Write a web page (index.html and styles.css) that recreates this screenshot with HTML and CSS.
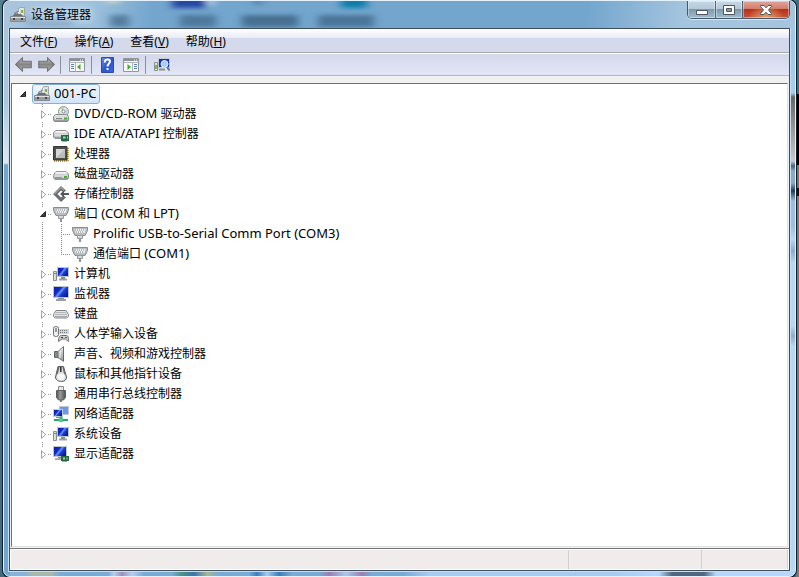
FILE: index.html
```html
<!DOCTYPE html>
<html lang="zh-CN">
<head>
<meta charset="utf-8">
<meta name="viewport" content="width=device-width, initial-scale=1">
<title>设备管理器</title>
<link rel="stylesheet" href="styles.css">
</head>
<body>
<svg class="sprite" aria-hidden="true">
  <defs>
    <linearGradient id="metal" x1="0" y1="0" x2="0" y2="1"><stop offset="0" stop-color="#f4f4f4"/><stop offset="1" stop-color="#8c9093"/></linearGradient>
    <linearGradient id="screen" x1="0" y1="0" x2="1" y2="0.600"><stop offset="0" stop-color="#0d1fae"/><stop offset=".4" stop-color="#1029c4"/><stop offset=".55" stop-color="#6f97f0"/><stop offset=".7" stop-color="#1c3fd6"/><stop offset="1" stop-color="#0c1c9c"/></linearGradient>
    <linearGradient id="arrow" x1="0" y1="0" x2="0" y2="1"><stop offset="0" stop-color="#c4c4c4"/><stop offset=".5" stop-color="#858585"/><stop offset="1" stop-color="#b4b4b4"/></linearGradient>
    <linearGradient id="book" x1="0" y1="0" x2="1" y2="1"><stop offset="0" stop-color="#6f93e8"/><stop offset=".5" stop-color="#2f55c8"/><stop offset="1" stop-color="#3b66d4"/></linearGradient>
    <linearGradient id="dark" x1="0" y1="0" x2="1" y2="0"><stop offset="0" stop-color="#4c4f51"/><stop offset=".4" stop-color="#9a9d9f"/><stop offset="1" stop-color="#4c4f51"/></linearGradient>
    <filter id="soft" x="-50%" y="-100%" width="200%" height="300%"><feGaussianBlur stdDeviation="4 2"/></filter>
  </defs>
  <symbol id="i-pc" viewBox="0 0 16 16">
    <path d="M7.500 8.500V4.500L9.500.500H14.500V9z" fill="#e9ebec" stroke="#a3a6a8"/>
    <path d="M10.500 2h3v5h-3z" fill="#fff" stroke="#bbb" stroke-width=".5"/><path d="M11 3h2v3h-2z" fill="#6dbb3c"/>
    <path d="M3 8.500l2-2 6 .5 2 2H2z" fill="#6d7174"/>
    <path d="M.500 9.500h15v5H.500z" fill="url(#metal)" stroke="#85898c"/><path d="M1 12h14" stroke="#73787b"/><path d="M3 11h2v2H3zm8 0h2v2h-2z" fill="#444"/><path d="M4 6.500l5-2.500" stroke="#777"/>
  </symbol>
  <symbol id="i-drive" viewBox="0 0 16 16">
    <path d="M1 8l2-2.500h10L15.500 8v4.500L14 13.500H2L.500 12z" fill="url(#metal)" stroke="#909497"/><path d="M2 7.500l1.500-1.500h9L14 7.500z" fill="#f7f7f7"/><path d="M1.500 9h13v3h-13z" fill="#d8dadb"/><path d="M11 10h3v2h-3z" fill="#43b52b"/><path d="M2 11.500h7" stroke="#909497"/>
  </symbol>
  <symbol id="i-dvd" viewBox="0 0 16 16">
    <circle cx="10.500" cy="5.500" r="5" fill="#dfe4e4" stroke="#8d9294"/><path d="M10.500 5.500L7.500 2A5 5 0 0 1 10.500 1z" fill="#a6d49a"/><path d="M10.500 5.500l4 2.500V4z" fill="#b8c9e5"/><circle cx="10.500" cy="5.500" r="1.500" fill="#fff" stroke="#888"/>
    <path d="M.500 10.500l2-2h11l2 2v3.500l-1 1.500H1.500l-1-1.500z" fill="url(#metal)" stroke="#85898b"/><path d="M1.500 11h13v2.500h-13z" fill="#dddfe0"/><path d="M3 12.500h6" stroke="#7f8385"/><path d="M11 11.500h3v2h-3z" fill="#3ab428"/>
  </symbol>
  <symbol id="i-ide" viewBox="0 0 16 16">
    <path d="M.500 7l2-2.500h10.500l2.500 2.500v4L14 12.500H2L.500 11z" fill="url(#metal)" stroke="#909497"/><path d="M2 6.500L3.500 5.300h9L14 6.500z" fill="#fafafa"/><path d="M1.500 8h13v2.500h-13z" fill="#dcdedf"/><path d="M8 9h8v6H8z" fill="#256b45"/><path d="M10 10.500h2.500v2H10zm4 0h1v2h-1z" fill="#a5dfb3"/><path d="M9 15.500h5" stroke="#d0ac40"/>
  </symbol>
  <symbol id="i-cpu" viewBox="0 0 16 16">
    <path d="M1 15h14V1" fill="none" stroke="#c99a37" stroke-width="2" stroke-dasharray="1 1"/><path d="M.500.500h13.500v13.500H.500z" fill="#505050" stroke="#353535"/><path d="M3 3h9v9H3z" fill="#b9bcbd"/><path d="M3 12V3h9z" fill="#d4d6d7"/>
  </symbol>
  <symbol id="i-store" viewBox="0 0 16 16">
    <path d="M8 0l5 4.500-2.500 2L8 4.500 4.500 8 8 11.500l2.500-2 2.500 2L8 16 0 8z" fill="#6c6f71"/><path d="M1.500 8L8 1.500l3 2.800" fill="none" stroke="#b8babb"/><path d="M7 8l4-3.500V7h5v2h-5v2.500z" fill="#55585a"/>
  </symbol>
  <symbol id="i-port" viewBox="0 0 16 16">
    <path d="M.500 1.500h15v3L13 9.500H3L.500 4.500z" fill="#b9bec1" stroke="#888c8f"/><path d="M2.500 3h11l-1 4h-9z" fill="#eef0f1"/><path d="M3 4h10M4 6h8" stroke="#7b8083" stroke-dasharray="1 1"/><path d="M5.500 9.500h5v3h-5z" fill="#d8dbdc" stroke="#94989a"/><path d="M7 13h2v3H7z" fill="#8f9395"/>
  </symbol>
  <symbol id="i-computer" viewBox="0 0 16 16">
    <path d="M4 1h12v10H4z" fill="#bfc5cd"/><path d="M5 2h10v8H5z" fill="url(#screen)"/><path d="M8 11h4v2H8z" fill="#858a8e"/><path d="M6 13.500h8" stroke="#9ca0a3" stroke-width="2"/><path d="M.500 5.500h3v9h-3z" fill="#d8dbdc" stroke="#888d90"/><path d="M1 7.500h2" stroke="#51ad38"/>
  </symbol>
  <symbol id="i-monitor" viewBox="0 0 16 16">
    <path d="M0 0h16v12H0z" fill="#bfc5cd"/><path d="M1 1h14v10H1z" fill="url(#screen)"/><path d="M5 12h6v1.500H5z" fill="#8b9094"/><path d="M3 14h10" stroke="#9ca0a3" stroke-width="2"/>
  </symbol>
  <symbol id="i-keyboard" viewBox="0 0 16 16">
    <path d="M3 4.500h10l2.500 4v2l-2 1.500h-11l-2-1.500v-2z" fill="#e2e4e5" stroke="#808487"/><path d="M3.500 6.500h9M2.500 8.500h11" stroke="#85898c" stroke-dasharray="1 1"/><path d="M2 10.500h12" stroke="#a2a6a8"/>
  </symbol>
  <symbol id="i-hid" viewBox="0 0 16 16">
    <rect x=".5" y=".5" width="5" height="10" rx="2" fill="#eceeef" stroke="#6d7174"/><path d="M3 2v4" stroke="#444"/><path d="M6 3h10v5H6z" fill="#d3d6d8"/><path d="M7 4.500h8M7 6.500h8" stroke="#74787b" stroke-dasharray="1 1"/><path d="M5.500 15.500c0-4 1-6 3-6h5c2 0 2 3 2 6l-3-2.500H9z" fill="#d0d4d7" stroke="#676c70"/><path d="M8 11.500h2" stroke="#333"/><path d="M12 11.500h2" stroke="#3659b8"/>
  </symbol>
  <symbol id="i-sound" viewBox="0 0 16 16">
    <path d="M1.500 5.500H5v6H1.500z" fill="#858a8d" stroke="#606467"/><path d="M5 5.500L10.500.500v15L5 11.500z" fill="url(#metal)" stroke="#7c8083"/><path d="M10.500 1v14" stroke="#666"/><path d="M7 5v7" stroke="#f6f6f6"/>
  </symbol>
  <symbol id="i-mouse" viewBox="0 0 16 16">
    <path d="M5 .500h5.500L13.500 11c0 3-2 4.500-5 4.500S2.500 14 2.500 11z" fill="#d9dbdd" stroke="#5a5e61"/><path d="M5 .500L3 10l2-3 1.500-6zM10.500.500L12.800 10l-2-3L9.500 1z" fill="#64686b"/><path d="M7.800 1v5" stroke="#2c2f31" stroke-width="1.500"/><path d="M4.500 9c2-2 5-2 7 0v3.500c-1 2-6 2-7 0z" fill="#f7f7f7"/>
  </symbol>
  <symbol id="i-usb" viewBox="0 0 16 16">
    <path d="M5.500.500h5v5h-5z" fill="#e5e7e8" stroke="#868a8d"/><path d="M3.500 4.500h9v7l-2 2.500h-5l-2-2.500z" fill="url(#dark)" stroke="#5c5f61"/><path d="M7 14h2v2H7z" fill="#777"/>
  </symbol>
  <symbol id="i-net" viewBox="0 0 16 16">
    <path d="M6 0h10v9H6z" fill="#bfc5cd"/><path d="M7 1h8v7H7z" fill="#6d98ea"/><path d="M0 3h10v8H0z" fill="#c6ccd3"/><path d="M1 4h8v6H1z" fill="url(#screen)"/><path d="M3 11h4v1H3z" fill="#8b9094"/><path d="M7 10.500h2.500V13H15v2H1v-2h6z" fill="#27a66b"/><path d="M6 12h4v4H6z" fill="#4ecb8e"/>
  </symbol>
  <symbol id="i-display" viewBox="0 0 16 16">
    <path d="M0 0h14v11H0z" fill="#bfc5cd"/><path d="M1 1h12v9H1z" fill="url(#screen)"/><path d="M5 11h4v1.500H5z" fill="#8b9094"/><path d="M2 13h7" stroke="#a9adb0" stroke-width="2"/><path d="M8 10h8v5H8z" fill="#27663f"/><path d="M10 11.500h2v2h-2zm3.500 0h1v2h-1z" fill="#9fdab0"/><path d="M9 15.500h5" stroke="#cfa93f"/>
  </symbol>
  <symbol id="i-back" viewBox="0 0 16 14">
    <path d="M.700 7L7 .800V4h8.300v6H7v3.200z" fill="url(#arrow)" stroke="#707274"/>
  </symbol>
  <symbol id="i-scan" viewBox="0 0 16 16">
    <path d="M.500 5.500h3v8h-3z" fill="#e5e8e5" stroke="#8a8e90"/><path d="M1 8h2v4H1z" fill="#78b84e"/><path d="M4 1h12v10H4z" fill="#c5c9cd"/><path d="M5 2h10v8H5z" fill="#1730b4"/><path d="M5 12.500h6" stroke="#8c9093" stroke-width="2"/><circle cx="10.500" cy="7" r="3.500" fill="#a9cdf7" stroke="#e6eef6"/><path d="M13 10l2.500 3.500" stroke="#717579" stroke-width="2"/>
  </symbol>
  <symbol id="i-open" viewBox="0 0 6 6"><path d="M5.500.500v5h-5z" fill="#404040" stroke="#262626"/></symbol>
  <symbol id="i-closed" viewBox="0 0 6 9"><path d="M.500.700v7.600L4.700 4.500z" fill="#fff" stroke="#a0a0a0"/></symbol>
</svg>

<main class="window">
  <header class="titlebar">
    <svg class="reflections" aria-hidden="true">
      <g filter="url(#soft)">
        <rect x="168" y="-4" width="34" height="11" fill="#2747a4"/><rect x="204" y="-2" width="6" height="6" fill="#c7dcf3"/>
        <rect x="102" y="-5" width="14" height="7" fill="#d8d4b0"/><rect x="250" y="-3" width="8" height="7" fill="#5580aa"/><rect x="337" y="-4" width="26" height="11" fill="#087eaa"/>
        <g fill="#3f6688"><rect x="24" y="15" width="44" height="10" opacity=".3"/><rect x="106" y="14" width="19" height="12" opacity=".7"/><rect x="176" y="14" width="36" height="12" opacity=".7"/><rect x="238" y="14" width="56" height="12" opacity=".85"/><rect x="314" y="14" width="56" height="12" opacity=".75"/></g>
      </g>
    </svg>
    <svg class="icon title-icon" aria-hidden="true"><use href="#i-pc"/></svg>
    <h1 class="title">设备管理器</h1>
    <div class="controls">
      <button class="control" type="button" aria-label="最小化"><svg width="12" height="12" viewBox="0 0 12 12"><path d="M.500 6.500h11v4H.500z" fill="#fff" stroke="#4d5562"/></svg></button>
      <button class="control" type="button" aria-label="最大化"><svg width="12" height="12" viewBox="0 0 12 12"><path d="M.500 1.500h11v9H.500zM3.500 4.500v3h5v-3z" fill="#fff" fill-rule="evenodd" stroke="#4d5562"/></svg></button>
      <button class="control close" type="button" aria-label="关闭"><svg width="12" height="12" viewBox="0 0 12 12"><path d="M.500 1.500h3.500l2 2.300 2-2.300h3.500v1L8.500 6l3 3.500v1H8L6 8.200l-2 2.300H.500v-1l3-3.500-3-3.500z" fill="#fff" stroke="#4d5562"/></svg></button>
    </div>
  </header>

  <div class="client">
    <nav class="menubar" aria-label="菜单">
      <button type="button">文件(<u>F</u>)</button>
      <button type="button">操作(<u>A</u>)</button>
      <button type="button">查看(<u>V</u>)</button>
      <button type="button">帮助(<u>H</u>)</button>
    </nav>
    <div class="toolbar" role="toolbar" aria-label="工具栏">
      <button type="button" aria-label="后退"><svg width="17" height="15"><use href="#i-back"/></svg></button>
      <button type="button" aria-label="前进"><svg class="flip" width="17" height="15"><use href="#i-back"/></svg></button>
      <span class="divider"></span>
      <button type="button" aria-label="显示控制台树"><svg width="16" height="14" viewBox="0 0 16 14"><path d="M.500.500h15v13H.500z" fill="#f8f8f8" stroke="#91969b"/><path d="M1 2h14" stroke="#8c9197" stroke-width="2"/><path d="M11 2h1m1 0h1" stroke="#fff"/><path d="M1 4.500h14M6.500 5v9" stroke="#b1b5b9"/><path d="M2 6.500h3M2 8.500h3M2 10.500h3" stroke="#5c7fb0"/><path d="M11.500 6v6L8 9z" fill="#3dae29"/></svg></button>
      <span class="divider"></span>
      <button type="button" aria-label="帮助"><svg width="15" height="16" viewBox="-1 0 15 16"><path d="M.500.500h12v15H.500z" fill="url(#book)" stroke="#2c4ca8"/><path d="M4 5.500V4c.500-2 5-2 5 .500 0 2-2.500 2-2.500 5" fill="none" stroke="#fff" stroke-width="2"/><path d="M5.500 11h2v2h-2z" fill="#fff"/></svg></button>
      <button type="button" aria-label="显示操作窗格"><svg width="16" height="14" viewBox="0 0 16 14"><path d="M.500.500h15v13H.500z" fill="#f8f8f8" stroke="#91969b"/><path d="M1 2h14" stroke="#8c9197" stroke-width="2"/><path d="M11 2h1m1 0h1" stroke="#fff"/><path d="M1 4.500h14M9.500 5v9" stroke="#b1b5b9"/><path d="M11 6.500h3M11 8.500h3M11 10.500h3" stroke="#5c7fb0"/><path d="M4.500 6v6L8 9z" fill="#3dae29"/></svg></button>
      <span class="divider"></span>
      <button type="button" aria-label="扫描检测硬件改动"><svg width="16" height="16"><use href="#i-scan"/></svg></button>
    </div>

    <section class="tree" aria-label="设备">
      <div class="row root">
        <button class="toggle open" type="button" aria-label="折叠"><svg><use href="#i-open"/></svg></button>
        <span class="selected"><svg class="icon"><use href="#i-pc"/></svg><span><span class="latin">001-PC</span></span></span>
      </div>
      <ul class="devices">
        <li><div class="row"><button class="toggle" type="button" aria-label="展开"><svg><use href="#i-closed"/></svg></button><svg class="icon"><use href="#i-dvd"/></svg><span><span class="latin">DVD/CD-ROM</span> 驱动器</span></div></li>
        <li><div class="row"><button class="toggle" type="button" aria-label="展开"><svg><use href="#i-closed"/></svg></button><svg class="icon"><use href="#i-ide"/></svg><span><span class="latin">IDE ATA/ATAPI</span> 控制器</span></div></li>
        <li><div class="row"><button class="toggle" type="button" aria-label="展开"><svg><use href="#i-closed"/></svg></button><svg class="icon"><use href="#i-cpu"/></svg><span>处理器</span></div></li>
        <li><div class="row"><button class="toggle" type="button" aria-label="展开"><svg><use href="#i-closed"/></svg></button><svg class="icon"><use href="#i-drive"/></svg><span>磁盘驱动器</span></div></li>
        <li><div class="row"><button class="toggle" type="button" aria-label="展开"><svg><use href="#i-closed"/></svg></button><svg class="icon"><use href="#i-store"/></svg><span>存储控制器</span></div></li>
        <li><div class="row"><button class="toggle open" type="button" aria-label="折叠"><svg><use href="#i-open"/></svg></button><svg class="icon"><use href="#i-port"/></svg><span>端口 <span class="latin">(COM</span> 和 <span class="latin">LPT)</span></span></div>
          <ul class="ports">
            <li><div class="row"><svg class="icon"><use href="#i-port"/></svg><span><span class="latin">Prolific USB-to-Serial Comm Port (COM3)</span></span></div></li>
            <li><div class="row"><svg class="icon"><use href="#i-port"/></svg><span>通信端口 <span class="latin">(COM1)</span></span></div></li>
          </ul>
        </li>
        <li><div class="row"><button class="toggle" type="button" aria-label="展开"><svg><use href="#i-closed"/></svg></button><svg class="icon"><use href="#i-computer"/></svg><span>计算机</span></div></li>
        <li><div class="row"><button class="toggle" type="button" aria-label="展开"><svg><use href="#i-closed"/></svg></button><svg class="icon"><use href="#i-monitor"/></svg><span>监视器</span></div></li>
        <li><div class="row"><button class="toggle" type="button" aria-label="展开"><svg><use href="#i-closed"/></svg></button><svg class="icon"><use href="#i-keyboard"/></svg><span>键盘</span></div></li>
        <li><div class="row"><button class="toggle" type="button" aria-label="展开"><svg><use href="#i-closed"/></svg></button><svg class="icon"><use href="#i-hid"/></svg><span>人体学输入设备</span></div></li>
        <li><div class="row"><button class="toggle" type="button" aria-label="展开"><svg><use href="#i-closed"/></svg></button><svg class="icon"><use href="#i-sound"/></svg><span>声音、视频和游戏控制器</span></div></li>
        <li><div class="row"><button class="toggle" type="button" aria-label="展开"><svg><use href="#i-closed"/></svg></button><svg class="icon"><use href="#i-mouse"/></svg><span>鼠标和其他指针设备</span></div></li>
        <li><div class="row"><button class="toggle" type="button" aria-label="展开"><svg><use href="#i-closed"/></svg></button><svg class="icon"><use href="#i-usb"/></svg><span>通用串行总线控制器</span></div></li>
        <li><div class="row"><button class="toggle" type="button" aria-label="展开"><svg><use href="#i-closed"/></svg></button><svg class="icon"><use href="#i-net"/></svg><span>网络适配器</span></div></li>
        <li><div class="row"><button class="toggle" type="button" aria-label="展开"><svg><use href="#i-closed"/></svg></button><svg class="icon"><use href="#i-computer"/></svg><span>系统设备</span></div></li>
        <li><div class="row"><button class="toggle" type="button" aria-label="展开"><svg><use href="#i-closed"/></svg></button><svg class="icon"><use href="#i-display"/></svg><span>显示适配器</span></div></li>
      </ul>
    </section>

    <footer class="statusbar"><span></span><span></span><span></span></footer>
  </div>
</main>
</body>
</html>
```

FILE: styles.css
```css
* { box-sizing: border-box; }

body {
  margin: 0;
  min-height: 100vh;
  display: flex;
  padding: 0 3px;
  font: 12px/20px "Noto Sans", "Noto Sans CJK SC", sans-serif;
  color: #000;
  background:
    linear-gradient(#3e6f83 0 94px, #000 94px 165px, #6f7270 165px 188px, #111 188px 196px, #777a79 196px) right / 3px 100% no-repeat,
    linear-gradient(#527e90, #42697c) #42697c;
}

button {
  font: inherit;
  color: inherit;
  border: 0;
  padding: 0;
  background: none;
}

svg { display: block; flex: none; }
.sprite { position: absolute; width: 0; height: 0; }
.icon { width: 16px; height: 16px; }
.latin { font-size: 13px; line-height: 1; }

.window {
  flex: 1;
  display: flex;
  flex-direction: column;
  padding: 0 5px 5px;
  border: 1px solid #e3f2fc;
  border-radius: 7px;
  overflow: hidden;
  box-shadow: 0 0 0 1px #111c24;
  background:
    linear-gradient(#9fc6ec 0 40px, #a6cdf2 92px, #666 96px, #c9c9c9 160px, #41617f 165px, #8ca9c6 170px 182px, #263a4e 190px, #9dbde3 200px 225px, #b4d7fa 238px, #8eabd6 250px, #b4d7fa 262px 325px, #90abc9 335px, #b4d7fa 345px) right / 6px 100% no-repeat,
    linear-gradient(#a9c5dc 0 80px, #a7c7e2 100px, #dce8f2 162px, #73a6cf 164px) left / 6px 100% no-repeat,
    linear-gradient(90deg, #86b3d9 0 20px, #a8b8ad 28px 48px, #79abd7 56px 104px, #b7cfea 110px, #9e8fc0 118px, #b2cff0 128px, #79abd7 140px 168px, #4b9282 178px, #3c72ae 190px, #a3b58f 203px, #79abd7 215px 245px, #3a7dbb 253px, #a5caee 263px, #3a7dbb 275px, #79abd7 288px 315px, #9b7db3 325px, #a9c8e9 342px, #9b7db3 358px, #79abd7 368px 400px, #a6cbf2 425px 610px, #b4d7fa 650px, #b4d7fa 655px, #4f6880 668px 700px, #b4d7fa 712px) bottom / 100% 6px no-repeat,
    #73a6cf;
}

.titlebar {
  position: relative;
  display: flex;
  align-items: center;
  height: 27px;
  margin: 0 -5px;
  padding: 0 5px 0 6px;
  background: linear-gradient(95deg, #a9c5dc, #9dc0dc 90px, #73a5cd 150px 580px, #a5c5df 680px);
}

.reflections { position: absolute; inset: 0; width: 100%; height: 100%; }
.title-icon { position: relative; }

.title {
  position: relative;
  flex: 1;
  margin: 0 0 0 5px;
  font-size: 12px;
  font-weight: 400;
  text-shadow: 0 0 6px #dceaf5, 0 0 10px #dceaf5;
}

.controls {
  position: relative;
  align-self: flex-start;
  display: flex;
  height: 18px;
  border: 1px solid #46586a;
  border-top: 0;
  border-radius: 0 0 5px 5px;
  overflow: hidden;
  box-shadow: 0 1px 0 #d6e8f5;
}

.control {
  display: flex;
  align-items: center;
  justify-content: center;
  width: 28px;
  border-right: 1px solid #4f6375;
  background: linear-gradient(#c6d8e5, #b3c8d8 50%, #7c9aaf 50%, #a2bccd);
  box-shadow: inset 0 0 0 1px #ffffff66;
}

.control + .control { width: 27px; }
.control + .control.close {
  width: 46px;
  border: 0;
  background: radial-gradient(ellipse at bottom, #e6a269, transparent 55%), linear-gradient(#e1a69a, #d17868 50%, #b8301a 50%, #c65538);
}

.client {
  flex: 1;
  display: flex;
  flex-direction: column;
  border: 1px solid #3c4f60;
  box-shadow: 0 0 0 1px #c5e0f3;
  background: #f0f0f0;
}

.menubar {
  display: flex;
  gap: 17px;
  height: 25px;
  padding: 2px 10px 1px;
  border-bottom: 1px solid #fff;
  background: linear-gradient(#fff, #e8ebf5 9px, #d4d9ec 9px 23px, #aaa 23px);
}

.menubar u { text-underline-offset: 1px; }

.toolbar {
  display: flex;
  align-items: center;
  height: 22px;
  padding: 0 2px;
  border-bottom: 1px solid #b4b8cd;
  background: linear-gradient(#d3d8ea, #e2e6f6);
}

.toolbar button { padding: 0 3px; }
.divider { width: 1px; height: 18px; margin: 0 4px 0 2px; background: #8a8f9c; }
.toolbar .divider ~ button { padding: 0 4px; }
.flip { transform: scaleX(-1); }

.tree {
  flex: 1;
  margin: 7px 1px 1px;
  border: 1px solid #707070;
  border-right-color: #dfe3e3;
  border-bottom-color: #dfe3e3;
  background: #fff;
  white-space: nowrap;
}

.tree ul { margin: 0; padding: 0; list-style: none; }

.row { display: flex; align-items: center; height: 20px; }
.row > .icon { margin-right: 5px; }
.root { padding-left: 7px; }

.selected {
  display: flex;
  align-items: center;
  gap: 4px;
  height: 20px;
  padding: 0 2px 0 1px;
  border: 1px solid #86b0dc;
  border-radius: 3px;
  background: linear-gradient(#f1f7fe, #cfe4fc);
}

.toggle { width: 13px; height: 9px; display: flex; align-items: center; padding-left: 1px; }
.toggle svg { width: 6px; height: 9px; }
.toggle.open { padding-left: 0; }
.toggle.open svg { height: 6px; }
.root .toggle.open { padding-left: 1px; }

.devices > li {
  padding-left: 28px;
  background: repeating-linear-gradient(#888 0 1px, transparent 1px 2px) 30px 0 / 1px 100% no-repeat;
}

.devices > li:last-child { background-size: 1px 10px; }
.devices > li > .row > .toggle {
  height: 13px;
  background:
    linear-gradient(#fff, #fff) left / 7px 100% no-repeat,
    repeating-linear-gradient(90deg, #999 0 1px, transparent 1px 2px) 8px 6px / 4px 1px no-repeat;
}

.ports > li {
  margin-left: 21px;
  padding-left: 11px;
  background:
    repeating-linear-gradient(#888 0 1px, transparent 1px 2px) left top / 1px 100% no-repeat,
    repeating-linear-gradient(90deg, #888 0 1px, transparent 1px 2px) left center / 10px 1px no-repeat;
}

.ports > li:last-child { background-size: 1px 10px, 10px 1px; }

.statusbar {
  display: flex;
  height: 22px;
  padding: 1px;
  border-top: 1px solid #777;
  background: #fff;
}

.statusbar span {
  flex: 0 0 86px;
  border-right: 1px solid #d0d0d0;
  background: #f0eceb;
}

.statusbar span:first-child { flex: 1; }
.statusbar span:nth-child(2) { flex-basis: 133px; }
```
